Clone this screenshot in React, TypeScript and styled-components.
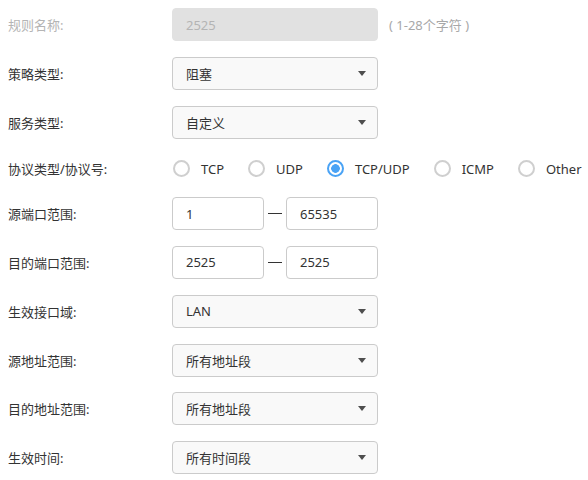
import { createGlobalStyle } from "styled-components"
import styled from "styled-components"

const GlobalStyle = createGlobalStyle`
  body {
    margin: 0;
    background: #fff;
    font-family: "Noto Sans", "Noto Sans CJK SC", sans-serif;
    font-size: 13px;
    color: #333;
  }
`

const PROTOCOLS = ["TCP", "UDP", "TCP/UDP", "ICMP", "Other"]

export default function App() {
  return (
    <>
      <GlobalStyle />
      <Form>
        <Row>
          <Label $disabled>规则名称:</Label>
          <Field>
            <TextBox $disabled>2525</TextBox>
            <Hint>( 1-28个字符 )</Hint>
          </Field>
        </Row>
        <Row>
          <Label>策略类型:</Label>
          <Select value="阻塞" />
        </Row>
        <Row>
          <Label>服务类型:</Label>
          <Select value="自定义" />
        </Row>
        <RadioRow>
          <Label>协议类型/协议号:</Label>
          <Radios>
            {PROTOCOLS.map((p) => (
              <RadioItem key={p}>
                <RadioCircle $checked={p === "TCP/UDP"} />
                <RadioText>{p}</RadioText>
              </RadioItem>
            ))}
          </Radios>
        </RadioRow>
        <Row>
          <Label>源端口范围:</Label>
          <Field>
            <PortBox>1</PortBox>
            <Dash />
            <PortBox>65535</PortBox>
          </Field>
        </Row>
        <Row>
          <Label>目的端口范围:</Label>
          <Field>
            <PortBox>2525</PortBox>
            <Dash />
            <PortBox>2525</PortBox>
          </Field>
        </Row>
        <Row>
          <Label>生效接口域:</Label>
          <Select value="LAN" />
        </Row>
        <Row>
          <Label>源地址范围:</Label>
          <Select value="所有地址段" />
        </Row>
        <Row>
          <Label>目的地址范围:</Label>
          <Select value="所有地址段" />
        </Row>
        <Row>
          <Label>生效时间:</Label>
          <Select value="所有时间段" />
        </Row>
      </Form>
    </>
  )
}

function Select({ value }: { value: string }) {
  return (
    <SelectBox>
      <span>{value}</span>
      <Caret />
    </SelectBox>
  )
}

const Form = styled.div`
  padding: 8px 0 0 8px;
  display: flex;
  flex-direction: column;
  gap: 15.8px;
`

const Row = styled.div`
  display: grid;
  grid-template-columns: 164px 1fr;
  align-items: center;
  height: 33px;
`

const RadioRow = styled(Row)`
  height: 27px;
  padding-top: 2px;
  box-sizing: border-box;
`

const Label = styled.div<{ $disabled?: boolean }>`
  color: ${({ $disabled }) => ($disabled ? "#b4b4b4" : "#333")};
  white-space: nowrap;
`

const Field = styled.div`
  display: flex;
  align-items: center;
  height: 100%;
`

const Box = styled.div`
  box-sizing: border-box;
  height: 33px;
  border: 1px solid #cbcbcb;
  border-radius: 4px;
  display: flex;
  align-items: center;
  padding: 0 13px;
`

const TextBox = styled(Box)<{ $disabled?: boolean }>`
  width: 206px;
  background: ${({ $disabled }) => ($disabled ? "#e1e1e1" : "#fff")};
  border-color: ${({ $disabled }) => ($disabled ? "#e1e1e1" : "#cbcbcb")};
  color: ${({ $disabled }) => ($disabled ? "#b4b4b4" : "#333")};
`

const Hint = styled.span`
  margin-left: 11px;
  color: #a8a8a8;
  white-space: nowrap;
`

const SelectBox = styled(Box)`
  width: 206px;
  background: #f9f9f9;
  justify-content: space-between;
  padding-right: 11px;
`

const Caret = styled.div`
  width: 0;
  height: 0;
  border-left: 4px solid transparent;
  border-right: 4px solid transparent;
  border-top: 5px solid #4e4e4e;
`

const PortBox = styled(Box)`
  width: 92px;
  background: #fff;
`

const Dash = styled.div`
  width: 14px;
  height: 1px;
  background: #333;
  margin: 0 4px 0 4px;
`

const Radios = styled.div`
  display: flex;
  align-items: center;
`

const RadioItem = styled.label`
  display: flex;
  align-items: center;
  margin-right: 23px;
  white-space: nowrap;
  flex-shrink: 0;
`

const RadioText = styled.span`
  margin-left: 11px;
`

const RadioCircle = styled.div<{ $checked?: boolean }>`
  box-sizing: border-box;
  flex-shrink: 0;
  width: 17px;
  height: 17px;
  margin-left: 1px;
  border-radius: 50%;
  border: 2px solid ${({ $checked }) => ($checked ? "#4aa3f5" : "#cfcfcf")};
  background: ${({ $checked }) => ($checked ? "radial-gradient(circle, #4aa3f5 0 4px, #fff 4.6px)" : "#fff")};
`
